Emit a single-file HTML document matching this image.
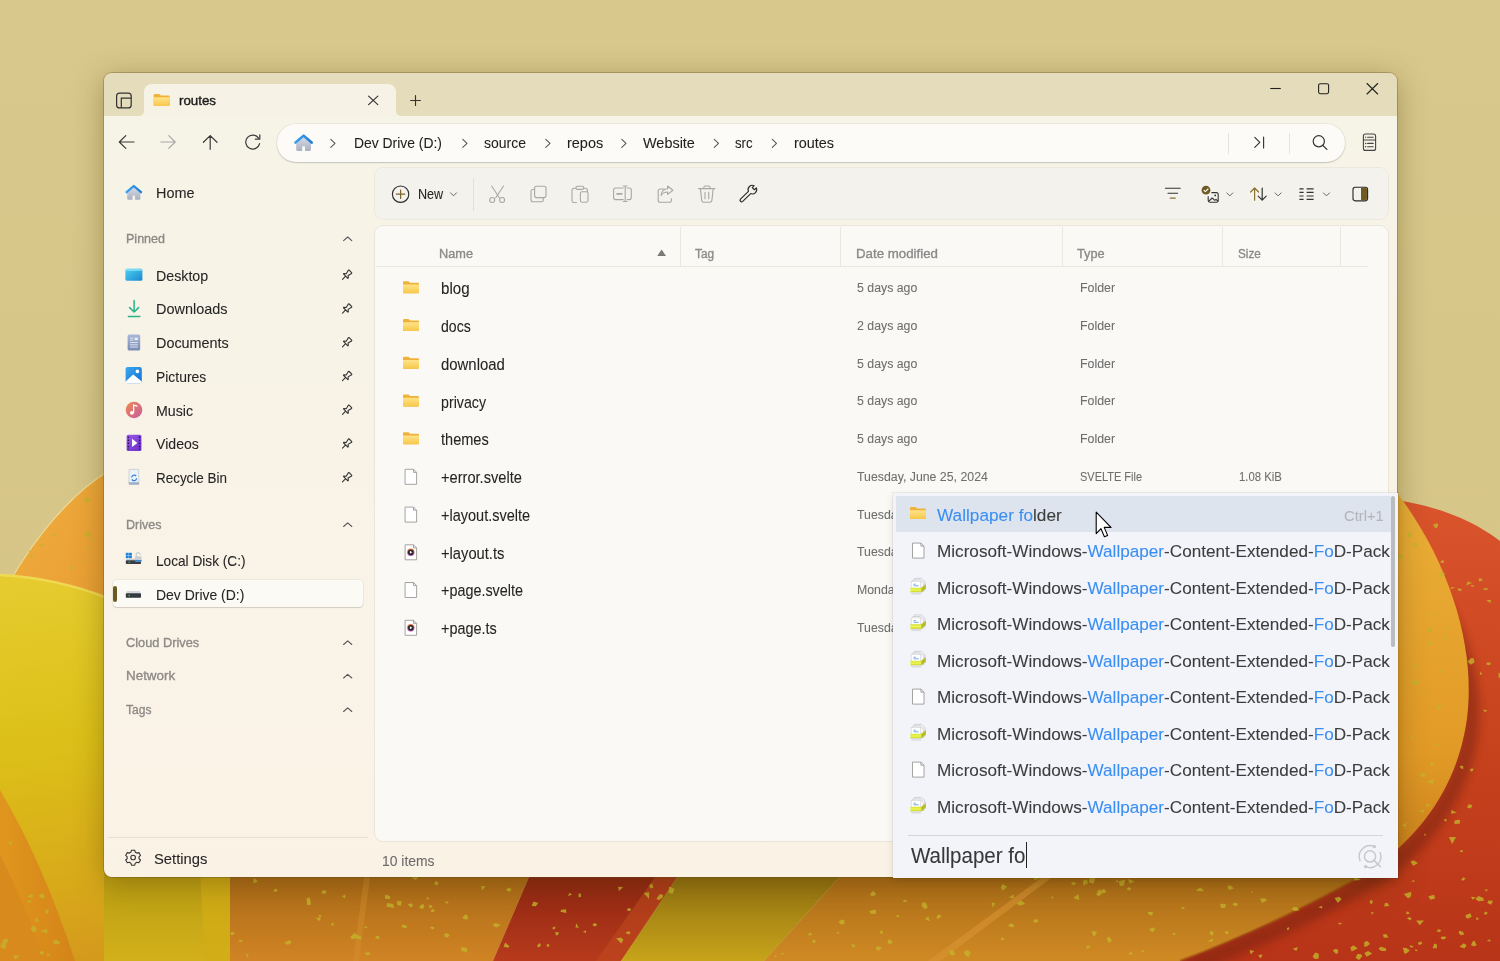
<!DOCTYPE html><html><head><meta charset="utf-8"><style>
*{margin:0;padding:0;box-sizing:border-box}
html,body{width:1500px;height:961px;overflow:hidden;background:#d8c98a}
body{position:relative;font-family:"Liberation Sans",sans-serif}
.t{position:absolute;white-space:nowrap;line-height:1;-webkit-text-stroke:0.08px currentColor}
.abs{position:absolute}
svg.ov{position:absolute;left:0;top:0;overflow:visible}
.b{color:#3a8ef2}
</style></head><body><svg width="1500" height="961" style="position:absolute;left:0;top:0">
<defs>
 <linearGradient id="kh" x1="0" y1="0" x2="0" y2="1"><stop offset="0" stop-color="#d8c88b"/><stop offset="1" stop-color="#d5c484"/></linearGradient>
 <linearGradient id="yl" x1="0" y1="574" x2="60" y2="961" gradientUnits="userSpaceOnUse"><stop offset="0" stop-color="#e6cc30"/><stop offset=".45" stop-color="#dcc018"/><stop offset=".8" stop-color="#d8aa1a"/><stop offset="1" stop-color="#d49a1c"/></linearGradient>
 <linearGradient id="or1" x1="0" y1="0" x2="1" y2="1"><stop offset="0" stop-color="#f0b040"/><stop offset="1" stop-color="#e89a30"/></linearGradient>
 <linearGradient id="or2" x1="0" y1="0" x2="1" y2="0"><stop offset="0" stop-color="#e0961e"/><stop offset="1" stop-color="#d48418"/></linearGradient>
 <linearGradient id="rd" x1="0" y1="0" x2="0" y2="1"><stop offset="0" stop-color="#da542c"/><stop offset=".5" stop-color="#c8441e"/><stop offset="1" stop-color="#b83418"/></linearGradient>
 <linearGradient id="pt" x1="0" y1="0" x2="0" y2="1"><stop offset="0" stop-color="#eab038"/><stop offset=".7" stop-color="#e29a26"/><stop offset="1" stop-color="#c8801c"/></linearGradient>
 <linearGradient id="sb1" x1="0" y1="0" x2="0" y2="1"><stop offset="0" stop-color="#a86816"/><stop offset="1" stop-color="#d08424"/></linearGradient>
 <linearGradient id="sb2" x1="0" y1="0" x2="0" y2="1"><stop offset="0" stop-color="#8a2410"/><stop offset="1" stop-color="#b83a1c"/></linearGradient>
 <linearGradient id="sb3" x1="0" y1="0" x2="0" y2="1"><stop offset="0" stop-color="#8c6c10"/><stop offset="1" stop-color="#c8a41a"/></linearGradient>
 <linearGradient id="sb4" x1="0" y1="0" x2="0" y2="1"><stop offset="0" stop-color="#a86a16"/><stop offset="1" stop-color="#d08a24"/></linearGradient>
 <linearGradient id="sb0" x1="0" y1="0" x2="0" y2="1"><stop offset="0" stop-color="#b89c12"/><stop offset="1" stop-color="#d2b01a"/></linearGradient>
<filter id="bl" x="-20%" y="-20%" width="140%" height="140%"><feGaussianBlur stdDeviation="5"/></filter>
</defs>
<rect width="1500" height="961" fill="url(#kh)"/>
<path d="M0 600 C20 560 60 500 110 470 L110 640 L0 640 Z" fill="url(#or1)" stroke="#eedc9a" stroke-width="1.2"/>
<path d="M0 574 C40 576 80 586 110 598 L240 598 L240 961 L0 961 Z" fill="url(#yl)"/>
<path d="M0 575 C40 577 80 587 110 599" fill="none" stroke="#f4e060" stroke-width="2.5" opacity=".7"/>
<path d="M104 870 L240 870 L240 961 L104 961 Z" fill="url(#sb0)"/>
<path d="M200 870 L232 870 L232 961 L205 961 Z" fill="#d2ac16" opacity=".8"/>
<path d="M0 790 C30 840 55 900 75 961 L0 961 Z" fill="url(#or2)"/>
<path d="M0 855 C18 890 32 925 44 961 L0 961 Z" fill="#d88a1c"/>
<path d="M230 870 L532 870 L493 961 L230 961 Z" fill="url(#sb1)"/>
<path d="M365 870 L371 870 L359 961 L353 961 Z" fill="#d89030" opacity=".4"/>
<path d="M532 870 L682 870 L621 961 L493 961 Z" fill="url(#sb2)"/>
<path d="M660 870 L682 870 L621 961 L596 961 Z" fill="#c04a1e" opacity=".6"/>
<path d="M682 870 L846 870 L764 961 L621 961 Z" fill="url(#sb3)"/>
<path d="M1150 870 L1380 870 L1380 498 C1430 503 1470 518 1500 541 L1500 961 L1150 961 Z" fill="url(#rd)"/>
<path d="M1430 590 C1458 640 1470 690 1462 735 C1452 790 1420 834 1372 870 C1320 900 1250 935 1180 961" fill="none" stroke="#6a1a08" stroke-width="18" opacity=".45" transform="translate(6 6)" filter="url(#bl)"/>
<path d="M1392 486 C1450 560 1478 650 1466 725 C1456 785 1424 832 1372 870 L1150 870 L1150 480 Z" fill="url(#pt)"/>
<path d="M846 870 L1372 870 C1320 900 1250 935 1180 961 L764 961 Z" fill="url(#sb4)"/>
<path d="M1052 870 L1062 870 L940 961 L928 961 Z" fill="#d89434" opacity=".6"/>
<path d="M1372 870 C1320 900 1250 935 1180 961" fill="none" stroke="#9a4a10" stroke-width="3" opacity=".5"/>
<g fill="#c4b42a" opacity=".8"><polygon points="1472.5,941.8 1474.3,940.5 1476.7,944.9 1473.8,946.5 1471.0,944.9"/><polygon points="1296.4,951.1 1292.6,948.8 1297.9,947.0"/><polygon points="1439.0,709.8 1436.7,708.4 1437.8,705.1 1441.7,706.0"/><polygon points="56.0,943.3 55.7,941.5 59.1,941.6 60.5,942.5 58.5,943.9"/><polygon points="319.2,921.3 315.6,917.8 321.0,917.7"/><polygon points="1332.6,950.6 1335.8,948.7 1338.2,950.1 1338.0,953.1 1336.1,954.1"/><polygon points="1446.8,636.4 1445.7,639.5 1443.5,638.6 1444.0,636.1"/><polygon points="1492.9,900.7 1491.2,904.7 1487.3,903.0 1488.4,900.4"/><polygon points="1438.0,523.8 1437.9,527.0 1435.4,528.4 1432.9,524.8 1436.5,523.3"/><polygon points="1373.0,901.1 1372.2,903.3 1371.0,904.4 1369.5,901.7 1370.7,900.1"/><polygon points="1076.0,884.3 1072.5,885.0 1071.0,882.7 1074.6,881.9"/><polygon points="1213.3,938.5 1212.3,942.0 1207.5,941.3"/><polygon points="807.5,935.5 810.2,932.0 812.3,935.1"/><polygon points="937.5,915.1 939.9,914.5 941.4,916.8 937.5,919.2 936.5,917.8"/><polygon points="467.0,947.9 467.0,952.6 461.3,950.8 461.2,947.1"/><polygon points="1083.0,880.7 1087.3,879.5 1087.6,883.6 1083.4,885.5"/><polygon points="1434.1,894.7 1435.1,898.4 1430.3,899.8 1428.4,896.2"/><polygon points="621.4,943.5 616.2,938.6 620.6,937.5 623.4,939.6"/><polygon points="1410.3,738.7 1412.0,733.2 1413.5,738.3"/><polygon points="1258.1,955.1 1262.6,954.5 1260.6,958.5"/><polygon points="1259.9,898.8 1264.8,898.2 1267.1,900.3 1262.1,903.0"/><polygon points="1487.6,912.4 1486.4,914.8 1483.7,914.1 1485.4,911.5"/><polygon points="1144.0,951.9 1141.6,952.3 1141.2,951.6 1141.9,950.2 1144.0,950.6"/><polygon points="1000.3,940.2 1002.4,936.7 1004.8,939.8"/><polygon points="404.4,927.8 401.2,927.0 403.0,924.2 406.7,925.8 406.8,928.4"/><polygon points="1462.1,589.3 1461.1,590.7 1459.1,591.1 1457.3,589.1 1458.4,588.2"/><polygon points="360.4,935.8 361.5,938.7 358.1,939.2 357.1,937.1 357.5,934.9"/><polygon points="1115.1,881.9 1117.6,879.8 1118.4,882.5"/><polygon points="464.0,919.2 462.5,917.8 464.9,914.7 467.3,914.7 468.1,919.3"/><polygon points="1406.9,918.2 1409.4,917.1 1411.8,918.5 1410.2,920.4"/><polygon points="84.6,546.7 88.4,548.1 86.4,550.4"/><polygon points="503.6,946.7 505.2,942.4 509.5,946.2 508.1,947.8"/><polygon points="412.4,906.6 410.9,907.4 407.7,904.6 409.9,903.6 412.7,903.7"/><polygon points="387.2,903.1 393.2,904.0 394.0,908.3 386.4,906.5"/><polygon points="1339.4,896.7 1341.6,899.2 1337.8,903.1 1334.5,898.1"/><polygon points="1486.2,600.3 1491.1,599.7 1490.3,602.9"/><polygon points="1422.3,944.1 1418.9,945.1 1417.7,943.0 1421.2,941.3"/><polygon points="19.5,955.5 15.3,959.8 12.8,955.5"/><polygon points="46.9,956.0 47.2,953.3 51.1,955.3"/><polygon points="366.3,955.2 364.9,953.1 369.9,952.0 369.5,954.9"/><polygon points="1148.0,912.0 1153.0,911.9 1152.1,915.6 1148.3,914.6"/><polygon points="401.0,905.6 398.0,905.4 396.3,901.8 399.7,900.8 401.7,901.5"/><polygon points="431.0,911.7 430.9,909.9 433.7,908.7 434.6,910.6 433.8,912.1"/><polygon points="365.7,925.9 367.9,927.5 364.1,928.2"/><polygon points="419.4,907.9 420.2,905.2 423.4,904.1 424.4,906.4 422.6,909.2"/><polygon points="1364.2,946.7 1364.3,941.9 1367.4,941.1 1370.1,944.0 1366.5,946.6"/><polygon points="48.0,913.6 44.9,913.2 45.8,909.8 48.7,909.3"/><polygon points="358.5,938.3 351.7,939.3 350.2,937.1 354.6,932.9 356.3,933.9"/><polygon points="995.3,903.3 992.7,907.4 991.6,902.6"/><polygon points="246.9,957.4 246.1,954.2 249.0,954.6"/><polygon points="578.9,927.8 575.5,927.4 576.1,923.3"/><polygon points="954.5,955.2 950.4,955.3 949.1,950.6 953.2,950.5 954.9,952.4"/><polygon points="1033.9,880.5 1035.3,875.9 1039.6,878.3"/><polygon points="783.6,953.3 783.4,954.6 781.5,955.2 781.6,952.8"/><polygon points="1470.5,768.7 1473.5,768.5 1472.8,771.1 1470.2,771.5"/><polygon points="1421.8,777.1 1420.7,775.7 1420.5,773.1 1424.9,772.8 1426.1,776.3"/><polygon points="578.6,897.2 578.5,893.7 580.7,893.2 581.2,896.8"/><polygon points="331.0,926.1 332.2,922.2 334.3,924.6"/><polygon points="1373.7,912.1 1372.3,914.7 1370.8,912.4"/><polygon points="1220.1,903.7 1225.9,903.9 1225.0,908.0 1220.9,907.9"/><polygon points="418.3,877.4 415.7,879.9 411.7,877.8 413.9,875.0"/><polygon points="1236.3,906.5 1232.2,904.4 1234.7,902.5 1238.1,903.8"/><polygon points="1314.8,959.1 1312.6,956.7 1315.1,952.6 1318.8,953.7 1318.7,958.5"/><polygon points="276.4,888.5 277.8,890.9 275.2,891.7 273.4,891.3 273.9,889.5"/><polygon points="1411.0,947.7 1409.9,946.5 1409.7,945.2 1412.9,945.9 1413.4,946.9"/><polygon points="1353.4,880.5 1355.6,876.7 1361.0,879.9"/><polygon points="1470.9,664.8 1467.5,661.4 1471.1,658.3 1473.5,658.0 1474.6,662.2"/><polygon points="10.8,845.5 7.8,842.5 12.7,840.9"/><polygon points="1403.6,894.1 1411.2,891.8 1411.1,896.3 1408.1,898.4"/><polygon points="1150.2,930.5 1149.7,928.7 1153.4,927.4 1155.5,929.2 1152.4,932.2"/><polygon points="33.1,557.1 31.0,557.4 29.8,555.4 30.3,553.9 32.8,555.4"/><polygon points="921.6,906.2 922.1,902.5 925.8,902.6 927.7,907.3 925.4,909.3"/><polygon points="1452.1,844.0 1448.9,837.1 1456.1,837.1"/><polygon points="1203.9,890.3 1202.0,891.2 1196.1,891.0 1197.1,889.4 1200.2,887.6"/><polygon points="1432.6,948.2 1434.3,943.6 1436.9,944.5 1436.8,948.2"/><polygon points="1079.2,900.0 1073.3,898.0 1078.3,894.0"/><polygon points="427.1,896.8 429.7,899.0 426.4,899.6"/><polygon points="1228.2,885.6 1231.4,885.9 1233.8,888.6 1229.3,890.0 1227.5,887.4"/><polygon points="8.5,940.0 7.2,942.8 5.2,943.1 1.5,940.8 5.5,938.4"/><polygon points="1459.6,850.9 1461.8,850.1 1463.1,850.8 1462.5,852.2 1459.8,851.7"/><polygon points="1446.1,821.9 1443.5,819.6 1446.7,819.1"/><polygon points="631.3,909.0 630.1,910.9 627.5,910.8 626.8,909.5 628.7,908.1"/><polygon points="888.4,939.5 891.1,940.1 892.8,942.5 889.6,944.6 887.5,942.4"/><polygon points="1209.4,934.1 1210.7,930.8 1213.6,932.0 1212.8,935.8"/><polygon points="30.6,928.0 33.8,924.9 36.2,928.6 36.6,930.7 32.3,932.2"/><polygon points="1089.3,878.6 1095.3,877.7 1093.7,883.7 1088.9,882.2"/><polygon points="1012.4,923.5 1014.7,926.4 1012.4,927.2 1008.7,926.6 1008.7,924.4"/><polygon points="321.8,915.5 319.7,917.9 318.6,915.0"/><polygon points="870.8,913.8 869.3,910.9 874.3,909.8 876.2,910.5 875.6,913.9"/><polygon points="1417.0,542.8 1417.8,545.6 1414.1,547.1 1413.5,545.5 1414.6,542.8"/><polygon points="1092.5,930.9 1097.1,932.0 1095.2,935.3 1093.6,936.7 1091.9,932.2"/><polygon points="1350.3,947.5 1353.4,945.2 1357.7,948.3 1355.6,949.6 1351.6,951.5"/><polygon points="47.4,933.5 39.7,931.0 47.2,928.9"/><polygon points="1288.7,927.0 1289.3,929.3 1287.3,930.3 1286.9,928.3"/><polygon points="1480.2,671.6 1482.3,673.8 1480.2,675.2"/><polygon points="1462.8,880.8 1461.1,880.1 1463.1,877.2 1465.8,878.5"/><polygon points="1498.7,678.1 1498.5,672.7 1503.7,675.8"/><polygon points="307.1,905.2 306.5,898.7 309.6,897.2 311.1,904.4"/><polygon points="1427.1,692.4 1423.3,694.6 1421.7,692.4"/><polygon points="1378.6,949.3 1380.6,946.4 1386.1,948.4 1385.9,951.0 1381.6,950.9"/><polygon points="1415.2,950.8 1415.1,949.5 1416.0,949.2 1417.8,950.4 1416.4,951.2"/><polygon points="531.8,905.9 533.4,901.5 538.3,902.9 535.8,906.3"/><polygon points="840.9,924.4 838.5,921.6 841.8,919.5 844.3,920.3 844.6,924.0"/><polygon points="91.1,540.3 91.8,539.0 93.4,538.9 94.2,540.5 92.6,541.6"/><polygon points="438.5,882.3 437.7,885.2 434.2,884.4 435.2,881.0"/><polygon points="445.7,903.3 444.9,902.1 447.7,901.3 448.5,903.6"/><polygon points="1470.9,896.7 1475.9,897.3 1472.6,899.8"/><polygon points="1467.6,581.5 1472.1,583.1 1465.9,585.4"/><polygon points="492.2,925.1 495.5,922.9 500.7,925.1 496.3,927.5"/><polygon points="432.2,929.4 429.7,927.0 433.8,926.8 434.4,928.5"/><polygon points="1406.3,914.0 1406.5,911.8 1408.1,911.4 1409.8,913.6 1407.2,914.3"/><polygon points="87.1,502.6 84.2,501.6 85.7,496.6 90.8,499.9"/><polygon points="1483.9,900.7 1478.5,901.3 1475.4,898.9 1478.4,896.1 1483.4,898.1"/><polygon points="565.9,909.3 566.4,913.0 560.4,911.7 561.2,909.7"/><polygon points="569.6,892.8 572.1,894.7 567.8,895.9"/><polygon points="1428.8,628.1 1432.5,628.5 1431.9,632.9 1426.0,631.0"/><polygon points="1433.3,642.6 1428.9,646.0 1427.8,641.0"/><polygon points="39.9,562.6 42.0,563.9 38.9,564.6"/><polygon points="1478.7,581.3 1478.9,579.1 1479.5,577.9 1482.6,579.2 1481.9,581.0"/><polygon points="1000.8,887.5 1002.5,883.9 1007.1,886.5 1005.4,888.5 1002.5,890.5"/><polygon points="1182.2,909.4 1181.3,907.1 1185.5,907.6"/><polygon points="555.2,932.1 557.4,932.3 559.1,932.5 558.0,935.1 555.9,935.5"/><polygon points="777.2,956.3 774.6,957.5 775.1,955.1"/><polygon points="1437.0,745.4 1435.8,745.3 1435.1,743.4 1437.6,743.1 1439.1,744.5"/><polygon points="968.8,956.9 965.8,956.1 963.7,951.9 967.5,950.0 970.7,952.3"/><polygon points="1451.2,586.9 1455.3,587.6 1450.5,589.2"/><polygon points="39.6,954.0 40.4,951.5 44.2,951.1 43.3,954.6"/><polygon points="811.7,941.9 813.9,939.6 815.9,940.5 814.7,943.0"/><polygon points="1411.2,532.5 1411.9,535.5 1409.8,538.0 1407.2,536.0 1409.0,532.3"/><polygon points="1322.3,905.7 1322.1,908.4 1318.2,907.3"/><polygon points="672.5,893.9 668.3,892.5 669.9,887.5 674.6,888.7"/><polygon points="929.9,921.2 924.9,919.2 928.2,916.3"/><polygon points="555.0,926.4 555.4,928.3 553.9,929.5 552.7,929.1 552.5,927.6"/><polygon points="872.0,896.5 870.0,894.2 873.2,890.7 876.2,894.5"/><polygon points="89.8,536.2 87.1,537.2 84.4,535.3 87.4,530.9 91.4,532.8"/><polygon points="1440.8,938.6 1441.2,936.8 1444.8,936.6 1446.5,937.3 1443.7,939.7"/><polygon points="1388.3,937.8 1383.8,937.4 1382.9,934.4 1386.4,934.0"/><polygon points="1009.0,897.6 1013.6,894.5 1013.7,898.3"/><polygon points="1459.7,766.5 1461.8,765.4 1463.3,766.5 1463.2,769.0 1461.1,768.4"/><polygon points="851.2,944.5 854.5,944.4 855.2,947.2 852.4,947.1"/><polygon points="1413.2,866.1 1410.5,861.4 1413.5,860.2 1418.0,863.1"/><polygon points="55.2,536.8 51.1,535.0 55.1,533.2"/><polygon points="242.2,942.2 239.1,941.6 239.0,939.8 242.3,939.9"/><polygon points="1442.2,577.2 1438.8,577.1 1439.8,573.3 1441.1,572.6 1445.2,573.3"/><polygon points="1413.3,882.1 1411.5,881.2 1413.0,880.3 1415.1,880.9"/><polygon points="1225.4,934.2 1224.7,932.1 1227.5,930.7 1229.0,933.3"/><polygon points="1439.8,931.9 1436.4,931.4 1438.5,929.0 1441.3,930.6"/><polygon points="630.4,933.9 627.7,934.3 625.3,932.6 629.5,931.1"/><polygon points="27.0,901.3 30.6,900.0 31.6,901.4 29.2,903.1"/><polygon points="1451.4,809.9 1457.0,812.7 1451.0,813.8"/><polygon points="898.9,917.0 896.2,917.0 896.8,915.2 899.3,915.2"/><polygon points="1438.3,670.5 1442.6,669.8 1440.6,673.2"/><polygon points="1103.3,893.3 1100.3,892.2 1102.1,889.8 1104.2,889.1 1106.7,892.1"/><polygon points="1454.6,824.1 1454.4,820.7 1457.6,819.8 1460.2,820.3 1459.6,823.8"/><polygon points="1021.7,900.7 1025.3,903.9 1019.7,905.4 1016.8,903.9 1019.0,901.4"/><polygon points="31.0,898.2 27.1,896.2 31.1,893.9 32.8,894.4 32.9,896.9"/><polygon points="258.1,881.4 253.1,883.3 254.0,878.1"/><polygon points="1490.7,662.7 1490.8,664.2 1488.4,665.3 1485.9,664.0 1487.7,662.3"/><polygon points="505.8,889.5 509.0,887.5 511.5,889.2 509.9,891.7 508.0,891.2"/><polygon points="1123.7,885.4 1120.0,886.2 1118.7,881.4 1123.4,879.7 1125.3,880.4"/><polygon points="1359.1,959.9 1355.7,958.0 1357.3,953.9 1360.7,954.1 1362.3,956.2"/><polygon points="429.7,908.4 428.9,904.7 432.1,905.6 432.4,907.0"/><polygon points="1435.6,615.0 1432.1,617.2 1433.1,613.5"/><polygon points="482.1,890.4 481.1,885.9 485.5,886.0"/><polygon points="1424.3,812.4 1419.9,811.5 1423.0,809.2"/><polygon points="1473.6,585.3 1474.0,587.1 1470.9,586.3 1471.3,584.9"/><polygon points="38.8,895.3 42.1,893.5 44.1,894.3 44.8,898.1 40.9,898.2"/><polygon points="649.2,892.2 649.0,898.9 643.7,893.1"/><polygon points="73.7,567.2 73.6,569.8 70.3,569.2 70.2,568.0 70.8,565.7"/><polygon points="385.5,899.0 384.6,895.8 386.5,894.7 389.9,896.2 390.3,898.9"/><polygon points="1249.6,950.0 1254.4,950.9 1250.6,954.2"/><polygon points="652.3,883.7 653.3,887.7 650.9,888.4 649.0,886.1 651.1,883.7"/><polygon points="596.8,925.6 594.7,926.5 592.5,925.2 593.9,923.1 596.9,924.0"/><polygon points="877.7,946.2 881.8,947.8 879.7,950.2 877.1,950.5 875.6,947.9"/><polygon points="1131.4,888.8 1129.4,890.5 1126.4,888.9 1129.0,887.1"/><polygon points="41.2,547.6 38.5,544.9 44.4,543.4"/><polygon points="1430.3,763.4 1431.3,762.3 1433.6,763.2 1433.9,764.9 1430.6,765.5"/><polygon points="1396.5,556.6 1399.7,554.3 1403.1,555.4 1402.7,558.6 1398.4,558.6"/><polygon points="1426.5,835.1 1424.6,835.7 1424.0,833.4"/><polygon points="28.0,551.8 29.8,550.0 31.0,551.2"/><polygon points="1484.3,889.8 1487.6,889.2 1486.9,891.6"/><polygon points="1412.0,683.6 1412.1,680.6 1418.4,680.8 1418.6,683.3 1415.5,685.7"/><polygon points="444.7,936.7 444.3,934.0 446.2,933.2 449.7,934.4 447.9,937.6"/><polygon points="1295.1,910.9 1291.8,909.5 1293.6,907.0 1296.7,907.0 1299.5,910.2"/><polygon points="1085.9,947.4 1087.8,944.9 1090.5,947.2 1087.2,949.1"/><polygon points="231.9,931.5 233.6,932.1 234.6,934.1 231.4,935.2 230.3,933.4"/><polygon points="1401.7,825.4 1406.8,822.5 1405.2,827.1"/><polygon points="345.3,894.6 345.2,898.6 341.9,896.3"/><polygon points="1429.4,806.1 1427.6,806.6 1425.7,805.7 1426.9,803.8 1429.2,804.5"/><polygon points="541.2,945.3 538.2,947.8 537.1,945.4 539.6,943.0"/><polygon points="284.2,942.9 289.2,940.0 291.5,941.8 289.9,944.3 287.1,944.8"/><polygon points="59.5,942.9 56.3,944.8 52.8,943.1 53.1,940.5 57.0,939.8"/><polygon points="1463.7,943.2 1466.7,945.3 1464.4,948.6 1459.5,946.8"/><polygon points="1096.3,894.7 1098.1,890.6 1100.0,889.6 1102.4,893.5 1098.8,896.2"/><polygon points="586.1,933.3 582.9,931.8 585.8,930.2"/><polygon points="379.4,939.0 374.7,938.3 376.7,935.9 379.0,935.7"/><polygon points="85.4,558.7 86.7,561.6 83.2,560.9"/><polygon points="619.0,891.1 618.0,886.7 623.2,887.1"/><polygon points="1407.0,953.0 1404.5,954.0 1402.8,947.7 1406.3,948.1 1409.9,950.3"/><polygon points="882.4,930.4 883.2,933.7 879.5,933.3 880.4,930.8"/><polygon points="1127.9,878.9 1134.4,881.2 1129.8,883.7"/><polygon points="1484.9,712.3 1483.0,709.2 1487.4,710.4"/><polygon points="1372.3,953.4 1366.7,956.8 1364.3,953.1 1368.2,951.1"/><polygon points="1484.1,590.0 1483.5,588.2 1486.8,588.0 1488.3,589.4"/><polygon points="35.2,918.8 37.1,918.2 38.8,921.0 37.4,921.9 35.3,921.7"/><polygon points="838.5,931.7 839.2,933.4 837.6,933.7 836.2,932.6"/><polygon points="1442.2,563.0 1440.4,562.7 1441.4,560.5 1443.4,560.0 1444.1,563.1"/><polygon points="1418.2,666.4 1413.4,667.7 1412.6,664.7 1414.8,664.2"/><polygon points="1384.4,906.4 1384.7,903.2 1387.4,902.7 1389.4,905.9"/><polygon points="1038.5,919.8 1037.8,922.1 1034.6,922.8 1032.9,921.0 1035.2,919.3"/><polygon points="1419.7,925.2 1416.1,920.5 1424.1,920.6"/><polygon points="1339.3,924.8 1338.1,922.4 1342.4,923.5"/><polygon points="1108.8,943.1 1106.5,938.4 1109.2,936.6 1112.0,940.4"/><polygon points="907.4,901.8 905.5,902.0 902.8,901.4 904.0,899.8 905.7,900.0"/><polygon points="1426.2,781.9 1433.9,778.9 1433.1,784.1"/><polygon points="1488.3,939.7 1490.1,939.5 1490.6,941.4 1486.9,941.0"/><polygon points="668.6,888.0 669.6,886.8 673.2,888.3 670.2,889.8"/><polygon points="323.2,890.1 326.8,891.3 325.2,894.1 321.2,892.9"/><polygon points="1253.2,891.7 1251.6,893.0 1250.6,891.5"/><polygon points="1472.5,806.1 1470.1,808.5 1467.1,807.5 1468.6,804.3 1471.1,804.8"/><polygon points="5.4,949.3 0.2,947.0 1.9,942.2 6.3,942.8"/><polygon points="662.4,898.1 658.4,900.3 656.5,898.4 659.9,894.0 663.3,895.1"/><polygon points="1175.2,934.7 1173.4,935.3 1172.3,933.6 1174.6,932.7 1175.4,933.4"/><polygon points="1447.0,626.3 1448.8,628.4 1445.1,628.7"/><polygon points="1465.8,915.0 1470.4,913.2 1471.7,916.7 1467.7,918.7 1465.6,917.3"/><polygon points="1462.8,931.7 1464.3,934.4 1461.0,935.3 1458.5,933.1 1459.5,930.7"/><polygon points="547.1,946.8 546.6,944.3 548.3,943.9 549.5,945.3 549.0,946.7"/><polygon points="1479.3,918.9 1476.3,920.1 1476.2,917.0"/><polygon points="1133.3,954.0 1128.5,955.1 1130.2,951.3"/><polygon points="1051.1,898.1 1052.1,895.8 1053.7,898.4"/></g>
</svg><div class="abs" style="left:104px;top:73px;width:1293px;height:804px;border-radius:8px;background:linear-gradient(180deg,#e5dcbb 0,#e5dcbb 43.5px,#f6f3e7 43.5px,#f9f3e7 400px,#fbf2e6 803px);box-shadow:0 6px 30px rgba(70,50,0,.36),0 0 0 1px rgba(100,85,40,.32);overflow:hidden"></div><div class="abs" style="left:144px;top:84px;width:252px;height:33px;background:#f6f2e6;border-radius:8px 8px 0 0"></div><div class="abs" style="left:136px;top:108px;width:8px;height:8px;background:#f6f2e6"></div><div class="abs" style="left:128px;top:100px;width:16px;height:16px;background:#e5dcbb;border-radius:0 0 5px 0"></div><div class="abs" style="left:396px;top:108px;width:8px;height:8px;background:#f6f2e6"></div><div class="abs" style="left:396px;top:100px;width:16px;height:16px;background:#e5dcbb;border-radius:0 0 0 5px"></div><div class="abs" style="left:277px;top:123.5px;width:1068px;height:38px;background:#fcfbf7;border-radius:19px;box-shadow:0 1px 1.5px rgba(0,0,0,.16),0 0 0 1px rgba(0,0,0,.045)"></div><div class="abs" style="left:375px;top:168px;width:1013px;height:51px;background:#f4f2ec;border-radius:8px;box-shadow:0 0 0 1px rgba(0,0,0,.045)"></div><div class="abs" style="left:375px;top:226px;width:1013px;height:615px;background:#faf9f5;border-radius:8px;box-shadow:0 0 0 1px rgba(0,0,0,.055)"></div><div class="abs" style="left:113px;top:580px;width:250px;height:27px;background:#fcfaf5;border-radius:4px;box-shadow:0 1px 1px rgba(0,0,0,.13),0 0 0 1px rgba(0,0,0,.04)"></div><div class="abs" style="left:113px;top:586px;width:3.5px;height:16px;background:#6b5a22;border-radius:2px"></div><div class="abs" style="left:108px;top:837px;width:260px;height:1px;background:#e6e0d4"></div><div class="abs" style="left:376px;top:266px;width:992px;height:1px;background:#ebe8e2"></div><div class="abs" style="left:680px;top:227px;width:1px;height:39px;background:#ebe8e2"></div><div class="abs" style="left:840px;top:227px;width:1px;height:39px;background:#ebe8e2"></div><div class="abs" style="left:1062px;top:227px;width:1px;height:39px;background:#ebe8e2"></div><div class="abs" style="left:1222px;top:227px;width:1px;height:39px;background:#ebe8e2"></div><div class="abs" style="left:1340px;top:227px;width:1px;height:39px;background:#ebe8e2"></div><div class="abs" style="left:473px;top:178px;width:1px;height:33px;background:#e2dfd8"></div><div class="abs" style="left:1228px;top:133px;width:1px;height:21px;background:#e6e4de"></div><div class="abs" style="left:1289px;top:133px;width:1px;height:21px;background:#e6e4de"></div><div class="t" style="left:179.3px;top:93.54px;font-size:13.66px;color:#1b1b1b;font-weight:normal;transform:scaleX(0.9749);transform-origin:0 0;-webkit-text-stroke:0.4px #1b1b1b;">routes</div>
<div class="t" style="left:354.4px;top:135.20px;font-size:15.12px;color:#1f1f1f;font-weight:normal;transform:scaleX(0.9192);transform-origin:0 0;">Dev Drive (D:)</div>
<div class="t" style="left:483.6px;top:135.20px;font-size:15.12px;color:#1f1f1f;font-weight:normal;transform:scaleX(0.9257);transform-origin:0 0;">source</div>
<div class="t" style="left:567px;top:135.20px;font-size:15.12px;color:#1f1f1f;font-weight:normal;transform:scaleX(0.9573);transform-origin:0 0;">repos</div>
<div class="t" style="left:643px;top:135.20px;font-size:15.12px;color:#1f1f1f;font-weight:normal;transform:scaleX(0.9552);transform-origin:0 0;">Website</div>
<div class="t" style="left:735.4px;top:135.20px;font-size:15.12px;color:#1f1f1f;font-weight:normal;transform:scaleX(0.8734);transform-origin:0 0;">src</div>
<div class="t" style="left:794.4px;top:135.20px;font-size:15.12px;color:#1f1f1f;font-weight:normal;transform:scaleX(0.9545);transform-origin:0 0;">routes</div>
<div class="t" style="left:155.5px;top:185.40px;font-size:15.12px;color:#252525;font-weight:normal;transform:scaleX(0.9548);transform-origin:0 0;">Home</div>
<div class="t" style="left:125.6px;top:232.33px;font-size:13.66px;color:#8b8985;font-weight:normal;transform:scaleX(0.9167);transform-origin:0 0;-webkit-text-stroke:0.35px #8b8985;">Pinned</div>
<div class="t" style="left:155.5px;top:267.50px;font-size:15.12px;color:#252525;font-weight:normal;transform:scaleX(0.9413);transform-origin:0 0;">Desktop</div>
<div class="t" style="left:155.5px;top:301.25px;font-size:15.12px;color:#252525;font-weight:normal;transform:scaleX(0.9561);transform-origin:0 0;">Downloads</div>
<div class="t" style="left:155.5px;top:335.00px;font-size:15.12px;color:#252525;font-weight:normal;transform:scaleX(0.9522);transform-origin:0 0;">Documents</div>
<div class="t" style="left:155.5px;top:368.75px;font-size:15.12px;color:#252525;font-weight:normal;transform:scaleX(0.9193);transform-origin:0 0;">Pictures</div>
<div class="t" style="left:155.5px;top:402.50px;font-size:15.12px;color:#252525;font-weight:normal;transform:scaleX(0.9399);transform-origin:0 0;">Music</div>
<div class="t" style="left:155.5px;top:436.25px;font-size:15.12px;color:#252525;font-weight:normal;transform:scaleX(0.9337);transform-origin:0 0;">Videos</div>
<div class="t" style="left:155.5px;top:470.00px;font-size:15.12px;color:#252525;font-weight:normal;transform:scaleX(0.8896);transform-origin:0 0;">Recycle Bin</div>
<div class="t" style="left:125.7px;top:518.13px;font-size:13.66px;color:#8b8985;font-weight:normal;transform:scaleX(0.9170);transform-origin:0 0;-webkit-text-stroke:0.35px #8b8985;">Drives</div>
<div class="t" style="left:155.5px;top:553.40px;font-size:15.12px;color:#252525;font-weight:normal;transform:scaleX(0.9040);transform-origin:0 0;">Local Disk (C:)</div>
<div class="t" style="left:155.5px;top:587.20px;font-size:15.12px;color:#252525;font-weight:normal;transform:scaleX(0.9233);transform-origin:0 0;">Dev Drive (D:)</div>
<div class="t" style="left:125.7px;top:635.93px;font-size:13.66px;color:#8b8985;font-weight:normal;transform:scaleX(0.9360);transform-origin:0 0;-webkit-text-stroke:0.35px #8b8985;">Cloud Drives</div>
<div class="t" style="left:125.7px;top:669.23px;font-size:13.66px;color:#8b8985;font-weight:normal;transform:scaleX(0.9819);transform-origin:0 0;-webkit-text-stroke:0.35px #8b8985;">Network</div>
<div class="t" style="left:125.7px;top:702.93px;font-size:13.66px;color:#8b8985;font-weight:normal;transform:scaleX(0.8801);transform-origin:0 0;-webkit-text-stroke:0.35px #8b8985;">Tags</div>
<div class="t" style="left:154px;top:851.10px;font-size:15.12px;color:#252525;font-weight:normal;transform:scaleX(0.9777);transform-origin:0 0;">Settings</div>
<div class="t" style="left:382.3px;top:853.72px;font-size:14.39px;color:#6a6a6a;font-weight:normal;transform:scaleX(0.9672);transform-origin:0 0;">10 items</div>
<div class="t" style="left:417.8px;top:187.05px;font-size:14.83px;color:#252525;font-weight:normal;transform:scaleX(0.8497);transform-origin:0 0;">New</div>
<div class="t" style="left:439px;top:247.23px;font-size:13.08px;color:#8a8a8a;font-weight:normal;transform:scaleX(0.9744);transform-origin:0 0;-webkit-text-stroke:0.35px #8a8a8a;">Name</div>
<div class="t" style="left:695px;top:247.23px;font-size:13.08px;color:#8a8a8a;font-weight:normal;transform:scaleX(0.9056);transform-origin:0 0;-webkit-text-stroke:0.35px #8a8a8a;">Tag</div>
<div class="t" style="left:855.7px;top:247.23px;font-size:13.08px;color:#8a8a8a;font-weight:normal;transform:scaleX(1.0160);transform-origin:0 0;-webkit-text-stroke:0.35px #8a8a8a;">Date modified</div>
<div class="t" style="left:1077px;top:247.23px;font-size:13.08px;color:#8a8a8a;font-weight:normal;transform:scaleX(0.9732);transform-origin:0 0;-webkit-text-stroke:0.35px #8a8a8a;">Type</div>
<div class="t" style="left:1238px;top:247.23px;font-size:13.08px;color:#8a8a8a;font-weight:normal;transform:scaleX(0.8960);transform-origin:0 0;-webkit-text-stroke:0.35px #8a8a8a;">Size</div>
<div class="t" style="left:441px;top:281.29px;font-size:15.72px;color:#252525;font-weight:normal;transform:scaleX(0.9620);transform-origin:0 0;">blog</div>
<div class="t" style="left:857px;top:281.13px;font-size:13.08px;color:#6e6e6e;font-weight:normal;transform:scaleX(0.9421);transform-origin:0 0;">5 days ago</div>
<div class="t" style="left:1079.7px;top:281.13px;font-size:13.08px;color:#6e6e6e;font-weight:normal;transform:scaleX(0.9466);transform-origin:0 0;">Folder</div>
<div class="t" style="left:441px;top:319.04px;font-size:15.72px;color:#252525;font-weight:normal;transform:scaleX(0.8942);transform-origin:0 0;">docs</div>
<div class="t" style="left:857px;top:318.88px;font-size:13.08px;color:#6e6e6e;font-weight:normal;transform:scaleX(0.9421);transform-origin:0 0;">2 days ago</div>
<div class="t" style="left:1079.7px;top:318.88px;font-size:13.08px;color:#6e6e6e;font-weight:normal;transform:scaleX(0.9466);transform-origin:0 0;">Folder</div>
<div class="t" style="left:441px;top:356.79px;font-size:15.72px;color:#252525;font-weight:normal;transform:scaleX(0.9492);transform-origin:0 0;">download</div>
<div class="t" style="left:857px;top:356.63px;font-size:13.08px;color:#6e6e6e;font-weight:normal;transform:scaleX(0.9421);transform-origin:0 0;">5 days ago</div>
<div class="t" style="left:1079.7px;top:356.63px;font-size:13.08px;color:#6e6e6e;font-weight:normal;transform:scaleX(0.9466);transform-origin:0 0;">Folder</div>
<div class="t" style="left:441px;top:394.54px;font-size:15.72px;color:#252525;font-weight:normal;transform:scaleX(0.9035);transform-origin:0 0;">privacy</div>
<div class="t" style="left:857px;top:394.38px;font-size:13.08px;color:#6e6e6e;font-weight:normal;transform:scaleX(0.9421);transform-origin:0 0;">5 days ago</div>
<div class="t" style="left:1079.7px;top:394.38px;font-size:13.08px;color:#6e6e6e;font-weight:normal;transform:scaleX(0.9466);transform-origin:0 0;">Folder</div>
<div class="t" style="left:441px;top:432.29px;font-size:15.72px;color:#252525;font-weight:normal;transform:scaleX(0.9256);transform-origin:0 0;">themes</div>
<div class="t" style="left:857px;top:432.13px;font-size:13.08px;color:#6e6e6e;font-weight:normal;transform:scaleX(0.9421);transform-origin:0 0;">5 days ago</div>
<div class="t" style="left:1079.7px;top:432.13px;font-size:13.08px;color:#6e6e6e;font-weight:normal;transform:scaleX(0.9466);transform-origin:0 0;">Folder</div>
<div class="t" style="left:441px;top:470.04px;font-size:15.72px;color:#252525;font-weight:normal;transform:scaleX(0.9303);transform-origin:0 0;">+error.svelte</div>
<div class="t" style="left:857px;top:469.88px;font-size:13.08px;color:#6e6e6e;font-weight:normal;transform:scaleX(0.9421);transform-origin:0 0;">Tuesday, June 25, 2024</div>
<div class="t" style="left:441px;top:507.79px;font-size:15.72px;color:#252525;font-weight:normal;transform:scaleX(0.9235);transform-origin:0 0;">+layout.svelte</div>
<div class="t" style="left:857px;top:507.63px;font-size:13.08px;color:#6e6e6e;font-weight:normal;transform:scaleX(0.9421);transform-origin:0 0;">Tuesday, June 25, 2024</div>
<div class="t" style="left:441px;top:545.54px;font-size:15.72px;color:#252525;font-weight:normal;transform:scaleX(0.9359);transform-origin:0 0;">+layout.ts</div>
<div class="t" style="left:857px;top:545.38px;font-size:13.08px;color:#6e6e6e;font-weight:normal;transform:scaleX(0.9421);transform-origin:0 0;">Tuesday, June 25, 2024</div>
<div class="t" style="left:441px;top:583.29px;font-size:15.72px;color:#252525;font-weight:normal;transform:scaleX(0.9151);transform-origin:0 0;">+page.svelte</div>
<div class="t" style="left:857px;top:583.13px;font-size:13.08px;color:#6e6e6e;font-weight:normal;transform:scaleX(0.9421);transform-origin:0 0;">Monday, June 24, 2024</div>
<div class="t" style="left:441px;top:621.04px;font-size:15.72px;color:#252525;font-weight:normal;transform:scaleX(0.9167);transform-origin:0 0;">+page.ts</div>
<div class="t" style="left:857px;top:620.88px;font-size:13.08px;color:#6e6e6e;font-weight:normal;transform:scaleX(0.9421);transform-origin:0 0;">Tuesday, June 25, 2024</div>
<div class="t" style="left:1079.7px;top:469.88px;font-size:13.08px;color:#6e6e6e;font-weight:normal;transform:scaleX(0.8389);transform-origin:0 0;">SVELTE File</div>
<div class="t" style="left:1238.7px;top:469.88px;font-size:13.08px;color:#6e6e6e;font-weight:normal;transform:scaleX(0.8675);transform-origin:0 0;">1.08 KiB</div>
<svg class="ov" width="1500" height="961"><defs>
 <linearGradient id="fold" x1="0" y1="0" x2="0" y2="1"><stop offset="0" stop-color="#ffe38a"/><stop offset="1" stop-color="#f7c84a"/></linearGradient>
 <linearGradient id="foldb" x1="0" y1="0" x2="0" y2="1"><stop offset="0" stop-color="#f0b43a"/><stop offset="1" stop-color="#e9a52a"/></linearGradient>
 <linearGradient id="roof" x1="0" y1="0" x2="1" y2="0"><stop offset="0" stop-color="#3aa0f0"/><stop offset="1" stop-color="#1c7fd8"/></linearGradient>
 <linearGradient id="hbody" x1="0" y1="0" x2="0" y2="1"><stop offset="0" stop-color="#d9dde6"/><stop offset="1" stop-color="#a9b0c2"/></linearGradient>
 <linearGradient id="desk" x1="0" y1="0" x2="1" y2="1"><stop offset="0" stop-color="#4fd0f2"/><stop offset="1" stop-color="#1a88d0"/></linearGradient>
 <linearGradient id="music" x1="0" y1="0" x2="1" y2="1"><stop offset="0" stop-color="#f08a50"/><stop offset="1" stop-color="#c85aa0"/></linearGradient>
 <linearGradient id="vid" x1="0" y1="0" x2="1" y2="1"><stop offset="0" stop-color="#9a5ae8"/><stop offset="1" stop-color="#6a2fc8"/></linearGradient>
 <linearGradient id="doc" x1="0" y1="0" x2="0" y2="1"><stop offset="0" stop-color="#a8b8d8"/><stop offset="1" stop-color="#7a8cb4"/></linearGradient>
 <linearGradient id="pic" x1="0" y1="0" x2="1" y2="1"><stop offset="0" stop-color="#3aa8f0"/><stop offset="1" stop-color="#1270d0"/></linearGradient>
 <g id="folder"><path d="M0 1.2 a1.2 1.2 0 0 1 1.2-1.2 h4.3 l1.6 1.6 h7.7 a1.2 1.2 0 0 1 1.2 1.2 v8 a1.2 1.2 0 0 1-1.2 1.2 h-13.6 a1.2 1.2 0 0 1-1.2-1.2 z" fill="url(#foldb)"/><path d="M0 3.2 h16 v7.6 a1.2 1.2 0 0 1-1.2 1.2 h-13.6 a1.2 1.2 0 0 1-1.2-1.2 z" fill="url(#fold)"/></g>
 <g id="file"><path d="M0.5 0.5 h8.4 l3.1 3.1 v11.9 h-11.5 z" fill="#fff" stroke="#9a9a9a" stroke-width="0.9"/><path d="M8.9 0.5 v3.1 h3.1" fill="none" stroke="#9a9a9a" stroke-width="0.9"/></g>
 <linearGradient id="tsr" x1="0" y1="0" x2="0" y2="1"><stop offset="0" stop-color="#f08040"/><stop offset="1" stop-color="#a050c0"/></linearGradient>
 <g id="tsfile"><path d="M0.5 0.5 h8.4 l3.1 3.1 v11.9 h-11.5 z" fill="#fff" stroke="#9a9a9a" stroke-width="0.9"/><path d="M8.9 0.5 v3.1 h3.1" fill="none" stroke="#9a9a9a" stroke-width="0.9"/><circle cx="6.2" cy="8" r="3.7" fill="url(#tsr)"/><circle cx="6.2" cy="8" r="2.8" fill="#2a2228"/><path d="M5.3 6.5 l2.5 1.5 l-2.5 1.5 z" fill="#fff"/></g>
 <g id="pin"><path d="M-2.3 0.6 Q-2.3 0 -1.7 0 H1.7 Q2.3 0 2.3 0.6 L1.3 4.6 L3.1 6 V6.7 H-3.1 V6 L-1.3 4.6 Z M0 6.7 L0 11.2" fill="none" stroke="#333" stroke-width="1.1" stroke-linejoin="round" stroke-linecap="round"/></g>
 <g id="chevup"><path d="M0.6 4.5 L4.7 0.8 L8.8 4.5" fill="none" stroke="#555" stroke-width="1.05" stroke-linecap="round" stroke-linejoin="round"/></g>
 <g id="chevr"><path d="M0.8 0.8 L5 4.8 L0.8 8.8" fill="none" stroke="#555" stroke-width="1.05" stroke-linecap="round" stroke-linejoin="round"/></g>
 <g id="chevd"><path d="M0.5 0.5 L3.5 3.5 L6.5 0.5" fill="none" stroke="#666" stroke-width="1" stroke-linecap="round" stroke-linejoin="round"/></g>
<g id="homeic"><path d="M-6.6 6.4 L0 1 L6.6 6.4 V12.8 a1.3 1.3 0 0 1-1.3 1.3 H1.3 V10.4 a0.6 0.6 0 0 0-0.6-0.6 h-1.4 a0.6 0.6 0 0 0-0.6 0.6 V14.1 H-5.3 a1.3 1.3 0 0 1-1.3-1.3 z" fill="url(#hbody)"/><path d="M-7.2 6.6 L0 0.4 L7.2 6.6" fill="none" stroke="url(#roof)" stroke-width="2.3" stroke-linecap="round" stroke-linejoin="round"/></g>
</defs>
<!-- tab strip -->
<rect x="116.6" y="93.1" width="14.6" height="14.8" rx="3" fill="none" stroke="#333" stroke-width="1.2"/>
<path d="M121.3 108 V98.2 H131.3" fill="none" stroke="#333" stroke-width="1.2"/>
<use href="#folder" x="153.7" y="94"/>
<path d="M368.6 96.1 L377.8 104.6 M377.8 96.1 L368.6 104.6" stroke="#333" stroke-width="1.15" stroke-linecap="round"/>
<path d="M415.5 95.6 V105.4 M410.6 100.5 H420.4" stroke="#333" stroke-width="1.15" stroke-linecap="round"/>
<!-- window controls -->
<path d="M1270.2 88.5 H1280.8" stroke="#222" stroke-width="1.1"/>
<rect x="1318.6" y="83.7" width="10" height="10" rx="1.6" fill="none" stroke="#222" stroke-width="1.1"/>
<path d="M1367 83.5 L1377.7 94 M1377.7 83.5 L1367 94" stroke="#222" stroke-width="1.1" stroke-linecap="round"/>
<!-- nav buttons -->
<path d="M119.3 142 H134 M119.3 142 L125.8 135.6 M119.3 142 L125.8 148.4" fill="none" stroke="#3a3a3a" stroke-width="1.2" stroke-linecap="round" stroke-linejoin="round"/>
<path d="M175.2 142 H160.9 M175.2 142 L168.7 135.6 M175.2 142 L168.7 148.4" fill="none" stroke="#a9a9a9" stroke-width="1.2" stroke-linecap="round" stroke-linejoin="round"/>
<path d="M210.2 135.6 V149.3 M210.2 135.6 L203.4 142.3 M210.2 135.6 L217 142.3" fill="none" stroke="#3a3a3a" stroke-width="1.2" stroke-linecap="round" stroke-linejoin="round"/>
<path d="M258.6 138.2 A7 7 0 1 0 259.6 143.6" fill="none" stroke="#3a3a3a" stroke-width="1.2" stroke-linecap="round"/>
<path d="M259.8 134.8 V139.2 H255.4" fill="none" stroke="#3a3a3a" stroke-width="1.2" stroke-linecap="round" stroke-linejoin="round"/>
<!-- breadcrumb home -->
<use href="#homeic" transform="translate(303.6 135.2) scale(1.12)"/>
<use href="#chevr" x="330" y="138.6"/>
<use href="#chevr" x="462" y="138.6"/>
<use href="#chevr" x="545" y="138.6"/>
<use href="#chevr" x="621" y="138.6"/>
<use href="#chevr" x="713.5" y="138.6"/>
<use href="#chevr" x="771.5" y="138.6"/>
<!-- address right icons -->
<path d="M1254.8 137.4 L1259.8 142.4 L1254.8 147.4 M1263.6 137 V147.9" fill="none" stroke="#333" stroke-width="1.15" stroke-linecap="round" stroke-linejoin="round"/>
<circle cx="1318.8" cy="141.3" r="5.6" fill="none" stroke="#333" stroke-width="1.2"/>
<path d="M1322.8 145.4 L1326.9 149.4" stroke="#333" stroke-width="1.3" stroke-linecap="round"/>
<rect x="1363.4" y="134" width="12.2" height="16.4" rx="2" fill="none" stroke="#444" stroke-width="1.1"/>
<path d="M1363.4 140 H1375.6" stroke="#444" stroke-width="1"/>
<path d="M1367.6 137.2 h5.6 M1367.6 143.4 h5.6 M1367.6 146.8 h5.6" stroke="#444" stroke-width="1.1" stroke-linecap="round"/>
<circle cx="1365.6" cy="137.2" r=".75" fill="#7a6628"/><circle cx="1365.6" cy="143.4" r=".75" fill="#444"/><circle cx="1365.6" cy="146.8" r=".75" fill="#444"/>
<!-- toolbar -->
<circle cx="400.6" cy="194.2" r="8.2" fill="none" stroke="#2a2a2a" stroke-width="1.15"/>
<path d="M400.6 190 V198.4 M396.4 194.2 H404.8" stroke="#7a6628" stroke-width="1.2" stroke-linecap="round"/>
<use href="#chevd" x="450" y="192.3"/>
<g fill="none" stroke="#a8a8a8" stroke-width="1.1" stroke-linecap="round" stroke-linejoin="round">
 <path d="M491.7 186 L499.3 197.8 M503.6 186 L495.7 197.8"/><circle cx="492.2" cy="200" r="2.5"/><circle cx="502.1" cy="200" r="2.5"/>
 <rect x="534.6" y="186.2" width="11.4" height="11.4" rx="2"/><path d="M534.6 189.5 h-1.8 a1.8 1.8 0 0 0-1.8 1.8 v8.5 a2 2 0 0 0 2 2 h8.5 a1.8 1.8 0 0 0 1.8-1.8 v-1.8"/>
 <path d="M576 188.3 h-2.2 a1.8 1.8 0 0 0-1.8 1.8 v10.6 a1.8 1.8 0 0 0 1.8 1.8 h2.6"/><path d="M583.6 188.3 h2 a1.8 1.8 0 0 1 1.8 1.8 v1.6"/><rect x="576" y="186.2" width="7.6" height="3.2" rx="1.2"/><rect x="580.4" y="191.8" width="7.6" height="10.4" rx="1.6"/>
 <path d="M623.2 188 h-7.6 a2 2 0 0 0-2 2 v7.6 a2 2 0 0 0 2 2 h7.6 M627.2 188 h2.1 a2 2 0 0 1 2 2 v7.6 a2 2 0 0 1-2 2 h-2.1 M625.2 186 v15.5 M623.4 186 h3.6 M623.4 201.5 h3.6"/><path d="M617 193.8 h4.8" stroke-width="1.7"/>
 <path d="M664 189 h-3.8 a2 2 0 0 0-2 2 v9.2 a2 2 0 0 0 2 2 h9.2 a2 2 0 0 0 2-2 v-1.6"/><path d="M667.6 186 l5.3 4.2 l-5.3 4.2 v-2.4 c-3.4 0-5.3 1.2-6.6 3.6 c0.5-4.4 2.6-6.6 6.6-6.8 z"/>
 <path d="M698.6 188.6 h16.4 M703.8 188.6 v-1 a1.6 1.6 0 0 1 1.6-1.6 h3 a1.6 1.6 0 0 1 1.6 1.6 v1 M700.4 188.6 l1.3 11.8 a2 2 0 0 0 2 1.8 h6.2 a2 2 0 0 0 2-1.8 l1.3-11.8 M705 192.3 v6.4 M708.7 192.3 v6.4"/>
</g>
<path transform="translate(739.2 184.4)" d="M1.27 14.67 L9.25 6.89 A4.3 4.3 0 0 1 14.99 1.29 L13.06 3.22 L15.18 5.34 L17.11 3.41 A4.3 4.3 0 0 1 11.51 9.15 L3.53 16.93 A1.6 1.6 0 0 1 1.27 14.67 Z" fill="none" stroke="#2a2a2a" stroke-width="1.15" stroke-linejoin="round"/>
<!-- toolbar right -->
<path d="M1165.4 188.2 H1180.2 M1168 193.2 H1177.6" stroke="#333" stroke-width="1.15" stroke-linecap="round"/>
<path d="M1170.4 198.2 H1175.2" stroke="#8a7230" stroke-width="1.3" stroke-linecap="round"/>
<circle cx="1206" cy="190.2" r="4.4" fill="#6e5a22"/>
<path d="M1204 190.3 l1.4 1.4 l2.6-2.7" fill="none" stroke="#fff" stroke-width="1.1" stroke-linecap="round" stroke-linejoin="round"/>
<path d="M1211.4 192.6 h5.2 a1.6 1.6 0 0 1 1.6 1.6 v6.4 a1.6 1.6 0 0 1-1.6 1.6 h-6.8 a1.6 1.6 0 0 1-1.6-1.6 v-4.4" fill="none" stroke="#333" stroke-width="1.1"/>
<path d="M1208.6 201.4 l3.6-3.4 l2.6 2.3 l1.2-1 l2.2 2" fill="none" stroke="#333" stroke-width="1.1" stroke-linejoin="round"/>
<circle cx="1215.2" cy="195.4" r="0.9" fill="#333"/>
<use href="#chevd" x="1226.3" y="192.4"/>
<path d="M1254.6 188 V200.2 M1254.6 188 L1250.6 192 M1254.6 188 L1258.6 192" fill="none" stroke="#8a7230" stroke-width="1.2" stroke-linecap="round" stroke-linejoin="round"/>
<path d="M1262.2 188 V200.2 M1262.2 200.2 L1258.2 196.2 M1262.2 200.2 L1266.2 196.2" fill="none" stroke="#333" stroke-width="1.2" stroke-linecap="round" stroke-linejoin="round"/>
<use href="#chevd" x="1274.6" y="192.4"/>
<path d="M1299.4 188.8 h4.2 M1299.4 192.4 h4.2 M1299.4 196 h4.2 M1299.4 199.4 h4.2 M1306.6 188.8 h7 M1306.6 192.4 h7 M1306.6 196 h7 M1306.6 199.4 h7" stroke="#333" stroke-width="1.15"/>
<use href="#chevd" x="1323" y="192.4"/>
<rect x="1353" y="187.2" width="14.6" height="13.6" rx="2.2" fill="none" stroke="#2a2a2a" stroke-width="1.15"/>
<path d="M1361 187.8 h4.4 a1.6 1.6 0 0 1 1.6 1.6 v9.2 a1.6 1.6 0 0 1-1.6 1.6 h-4.4 z" fill="#6e5a22"/>
<!-- sort triangle -->
<path d="M657.2 256 L661.6 249.6 L666 256 Z" fill="#7a7a7a"/>
<!-- sidebar icons -->
<use href="#homeic" transform="translate(133.8 185.6)"/>
<rect x="125.4" y="268.8" width="17" height="12" rx="1.6" fill="url(#desk)"/>
<rect x="125.4" y="268.8" width="17" height="2.2" rx="1" fill="#8fe6fa" opacity=".7"/>
<path d="M134.1 300.6 V312 M129.6 307.6 L134.1 312 L138.6 307.6" fill="none" stroke="#2ab38a" stroke-width="1.5" stroke-linecap="round" stroke-linejoin="round"/>
<path d="M128.4 316.4 H139.8" stroke="#2ab38a" stroke-width="1.5" stroke-linecap="round"/>
<rect x="127.6" y="334.4" width="12.6" height="16" rx="1.5" fill="url(#doc)"/>
<rect x="134.6" y="337.6" width="3.2" height="2.6" fill="#eef2f8"/><path d="M130 338.2 h3.4 M130 340.2 h3.4 M130 342.6 h7.8 M130 344.8 h7.8 M130 347 h7.8" stroke="#e8ecf4" stroke-width="0.9" fill="none"/>
<rect x="125.6" y="367" width="16.2" height="16.2" rx="2" fill="url(#pic)"/>
<path d="M125.6 381.4 L133.2 374.4 L141.8 381.6 V381.6 a1.6 1.6 0 0 1-1.6 1.6 h-13 a1.6 1.6 0 0 1-1.6-1.6 z" fill="#fff"/>
<circle cx="137.4" cy="371.4" r="1.8" fill="#fff"/>
<circle cx="134" cy="410" r="8.3" fill="url(#music)"/>
<path d="M133.6 405 V412.6 M133.6 405 L137 406.2" stroke="#fff" stroke-width="1.3" stroke-linecap="round"/>
<circle cx="131.9" cy="412.8" r="1.9" fill="#fff"/>
<rect x="126.6" y="434.8" width="14.8" height="16.2" rx="1.6" fill="url(#vid)"/>
<path d="M128.4 436.4 v13 M139.6 436.4 v13" stroke="#2a1060" stroke-width="1.5" stroke-dasharray="1.5 1.6"/>
<path d="M132 438.8 L137.4 442.9 L132 447 Z" fill="#fff"/>
<path d="M129.2 469.4 h9.4 l0.4 14 a1 1 0 0 1-1 1 h-8.2 a1 1 0 0 1-1-1 z" fill="#eef2f8" stroke="#b8c4d4" stroke-width="0.7"/>
<rect x="129" y="482.2" width="10" height="2.4" fill="#9fb0c4"/>
<path d="M131.6 477.5 a2.6 2.6 0 0 1 4.6-1.4 M136.6 478.2 a2.6 2.6 0 0 1-4.8 1.2" fill="none" stroke="#2a7fd8" stroke-width="1.2"/>
<!-- pins -->
<use href="#pin" transform="translate(350.4 271.40) rotate(45)"/>
<use href="#pin" transform="translate(350.4 305.20) rotate(45)"/>
<use href="#pin" transform="translate(350.4 338.90) rotate(45)"/>
<use href="#pin" transform="translate(350.4 372.70) rotate(45)"/>
<use href="#pin" transform="translate(350.4 406.40) rotate(45)"/>
<use href="#pin" transform="translate(350.4 440.20) rotate(45)"/>
<use href="#pin" transform="translate(350.4 473.90) rotate(45)"/>
<!-- chevrons up -->
<use href="#chevup" x="343" y="236.2"/>
<use href="#chevup" x="343" y="522"/>
<use href="#chevup" x="343" y="640"/>
<use href="#chevup" x="343" y="673.5"/>
<use href="#chevup" x="343" y="707"/>
<!-- drives -->
<rect x="125.8" y="552.8" width="2.9" height="2.6" fill="#1a86e0"/><rect x="129" y="552.8" width="2.9" height="2.6" fill="#1a86e0"/><rect x="125.8" y="555.6" width="2.9" height="2.6" fill="#1a86e0"/><rect x="129" y="555.6" width="2.9" height="2.6" fill="#1a86e0"/>
<path d="M127 558.8 h12.6 l1.4 1.4 h-15.2 z" fill="#c8ccd4"/>
<rect x="125.8" y="560.2" width="15.2" height="3.9" rx=".8" fill="#383c44"/>
<circle cx="129.2" cy="562.2" r=".8" fill="#3ac05a"/>
<path d="M136.2 556.4 v-1.8 a2 2 0 0 1 4 0" fill="none" stroke="#b8c0cc" stroke-width="1"/>
<rect x="135" y="556.2" width="6.6" height="5.4" rx=".8" fill="#c8cdd6"/>
<rect x="135" y="560" width="6.6" height="1.4" fill="#2a8ae0"/>
<path d="M127 591 h12.8 l1.2 2.4 h-15.2 z" fill="#d4d8de"/>
<rect x="125.8" y="593.3" width="15.2" height="4.5" rx=".8" fill="#34383f"/>
<circle cx="129.2" cy="595.5" r=".85" fill="#3ac05a"/>
<!-- settings gear -->
<g transform="translate(133.1 857.5)" fill="none" stroke="#333" stroke-width="1.1" stroke-linejoin="round">
<path d="M-1.6 -7.3 h3.2 l0.6 2 l1.6 0.9 l2 -0.5 l1.6 2.8 l-1.5 1.4 v1.8 l1.5 1.4 l-1.6 2.8 l-2 -0.5 l-1.6 0.9 l-0.6 2 h-3.2 l-0.6 -2 l-1.6 -0.9 l-2 0.5 l-1.6 -2.8 l1.5 -1.4 v-1.8 l-1.5 -1.4 l1.6 -2.8 l2 0.5 l1.6 -0.9 z"/>
<circle r="2.3"/>
</g>
<!-- file list icons -->
<use href="#folder" x="403" y="281.2"/>
<use href="#folder" x="403" y="319"/>
<use href="#folder" x="403" y="356.7"/>
<use href="#folder" x="403" y="394.5"/>
<use href="#folder" x="403" y="432.2"/>
<use href="#file" x="404.6" y="468.8"/>
<use href="#file" x="404.6" y="506.6"/>
<use href="#tsfile" x="404.6" y="544.3"/>
<use href="#file" x="404.6" y="582"/>
<use href="#tsfile" x="404.6" y="619.8"/>
</svg><div class="abs" style="left:893px;top:493px;width:505px;height:385px;background:#f2f4fa;box-shadow:0 0 0 1px rgba(0,0,0,.05),0 3px 8px rgba(0,0,0,.10)"></div><div class="abs" style="left:896px;top:495.5px;width:495px;height:36px;background:#dee4ee"></div><div class="abs" style="left:1391px;top:496px;width:4px;height:151px;background:#b9bcc2;border-radius:2px"></div><div class="abs" style="left:908px;top:835px;width:475px;height:1px;background:#d4d6dc"></div><div class="abs" style="left:893px;top:493px;width:498px;height:340px;overflow:hidden"><div class="t" style="left:44px;top:13.80px;font-size:17.01px;color:#3c3c3c;font-weight:normal;transform:scaleX(1.0130);transform-origin:0 0;"><span class="b">Wallpaper fo</span>lder</div>
<div class="t" style="left:44px;top:50.30px;font-size:17.01px;color:#3c3c3c;font-weight:normal;transform:scaleX(1.0084);transform-origin:0 0;">Microsoft-Windows-<span class="b">Wallpaper</span>-Content-Extended-<span class="b">Fo</span>D-Pack</div>
<div class="t" style="left:44px;top:86.80px;font-size:17.01px;color:#3c3c3c;font-weight:normal;transform:scaleX(1.0084);transform-origin:0 0;">Microsoft-Windows-<span class="b">Wallpaper</span>-Content-Extended-<span class="b">Fo</span>D-Pack</div>
<div class="t" style="left:44px;top:123.30px;font-size:17.01px;color:#3c3c3c;font-weight:normal;transform:scaleX(1.0084);transform-origin:0 0;">Microsoft-Windows-<span class="b">Wallpaper</span>-Content-Extended-<span class="b">Fo</span>D-Pack</div>
<div class="t" style="left:44px;top:159.80px;font-size:17.01px;color:#3c3c3c;font-weight:normal;transform:scaleX(1.0084);transform-origin:0 0;">Microsoft-Windows-<span class="b">Wallpaper</span>-Content-Extended-<span class="b">Fo</span>D-Pack</div>
<div class="t" style="left:44px;top:196.30px;font-size:17.01px;color:#3c3c3c;font-weight:normal;transform:scaleX(1.0084);transform-origin:0 0;">Microsoft-Windows-<span class="b">Wallpaper</span>-Content-Extended-<span class="b">Fo</span>D-Pack</div>
<div class="t" style="left:44px;top:232.80px;font-size:17.01px;color:#3c3c3c;font-weight:normal;transform:scaleX(1.0084);transform-origin:0 0;">Microsoft-Windows-<span class="b">Wallpaper</span>-Content-Extended-<span class="b">Fo</span>D-Pack</div>
<div class="t" style="left:44px;top:269.30px;font-size:17.01px;color:#3c3c3c;font-weight:normal;transform:scaleX(1.0084);transform-origin:0 0;">Microsoft-Windows-<span class="b">Wallpaper</span>-Content-Extended-<span class="b">Fo</span>D-Pack</div>
<div class="t" style="left:44px;top:305.80px;font-size:17.01px;color:#3c3c3c;font-weight:normal;transform:scaleX(1.0084);transform-origin:0 0;">Microsoft-Windows-<span class="b">Wallpaper</span>-Content-Extended-<span class="b">Fo</span>D-Pack</div>
</div><div class="t" style="left:1343.5px;top:509.45px;font-size:14.83px;color:#b3b6bb;font-weight:normal;transform:scaleX(0.9935);transform-origin:0 0;">Ctrl+1</div>
<div class="t" style="left:911px;top:844.57px;font-size:21.66px;color:#383838;font-weight:normal;transform:scaleX(0.9472);transform-origin:0 0;">Wallpaper fo</div>
<div class="abs" style="left:1026px;top:842px;width:1.3px;height:26px;background:#222"></div><svg class="ov" width="1500" height="961"><defs>
 <linearGradient id="ylb" x1="0" y1="0" x2="0" y2="1"><stop offset="0" stop-color="#d8e030"/><stop offset=".5" stop-color="#eef858"/><stop offset="1" stop-color="#c8d020"/></linearGradient>
<g id="pkg"><path d="M4.5 0.6 h7 l3.6 3.6 v8 h-10.6 z" fill="#f2f2f4" stroke="#c4c4c8" stroke-width="0.7"/><path d="M2.8 2.2 h7.4 l3.6 3.6 v8 h-11 z" fill="#f6f6f8" stroke="#c4c4c8" stroke-width="0.7"/><rect x="1.2" y="3.6" width="9.4" height="7" fill="#fff" stroke="#d0d0d4" stroke-width="0.6"/><path d="M3.6 6.4 h2.2 M3.6 8 h5" stroke="#70a8e8" stroke-width="1"/><rect x="0.4" y="10" width="10.8" height="4.6" fill="url(#ylb)"/><path d="M11.2 10 L15.8 6.4 V10.6 L11.2 14.6 Z" fill="#b4bc28"/><rect x="1.4" y="14.6" width="9.8" height="2.2" fill="#dcdce2"/></g>
</defs>
<use href="#folder" x="910" y="507"/>
<use href="#file" x="912" y="542.6"/>
<use href="#pkg" x="910" y="577.8"/>
<use href="#pkg" x="910" y="614.3"/>
<use href="#pkg" x="910" y="650.8"/>
<use href="#file" x="912" y="688.6"/>
<use href="#pkg" x="910" y="723.8"/>
<use href="#file" x="912" y="761.6"/>
<use href="#pkg" x="910" y="796.8"/>
<!-- search ring icon -->
<g fill="none" stroke="#c9c9cb" stroke-width="1.5" stroke-linecap="round">
<path d="M1374.4 846.6 A10.9 10.9 0 0 0 1360 860.7 M1380.1 852.6 A10.9 10.9 0 0 1 1365.6 866.6"/>
<circle cx="1370" cy="856.4" r="5.6"/>
<path d="M1374 860.4 L1380.3 866.6"/>
</g>
<circle cx="1374.4" cy="846.6" r="1.7" fill="#c9c9cb"/>
<circle cx="1365.6" cy="866.6" r="1.7" fill="#c9c9cb"/>
<!-- cursor -->
<path d="M1096.2 512.2 V533.6 L1101 528.6 L1104.4 536.8 L1107.6 535.4 L1104.2 527.4 L1111 527.4 Z" fill="#fff" stroke="#000" stroke-width="1.1" stroke-linejoin="round"/>
</svg></body></html>
